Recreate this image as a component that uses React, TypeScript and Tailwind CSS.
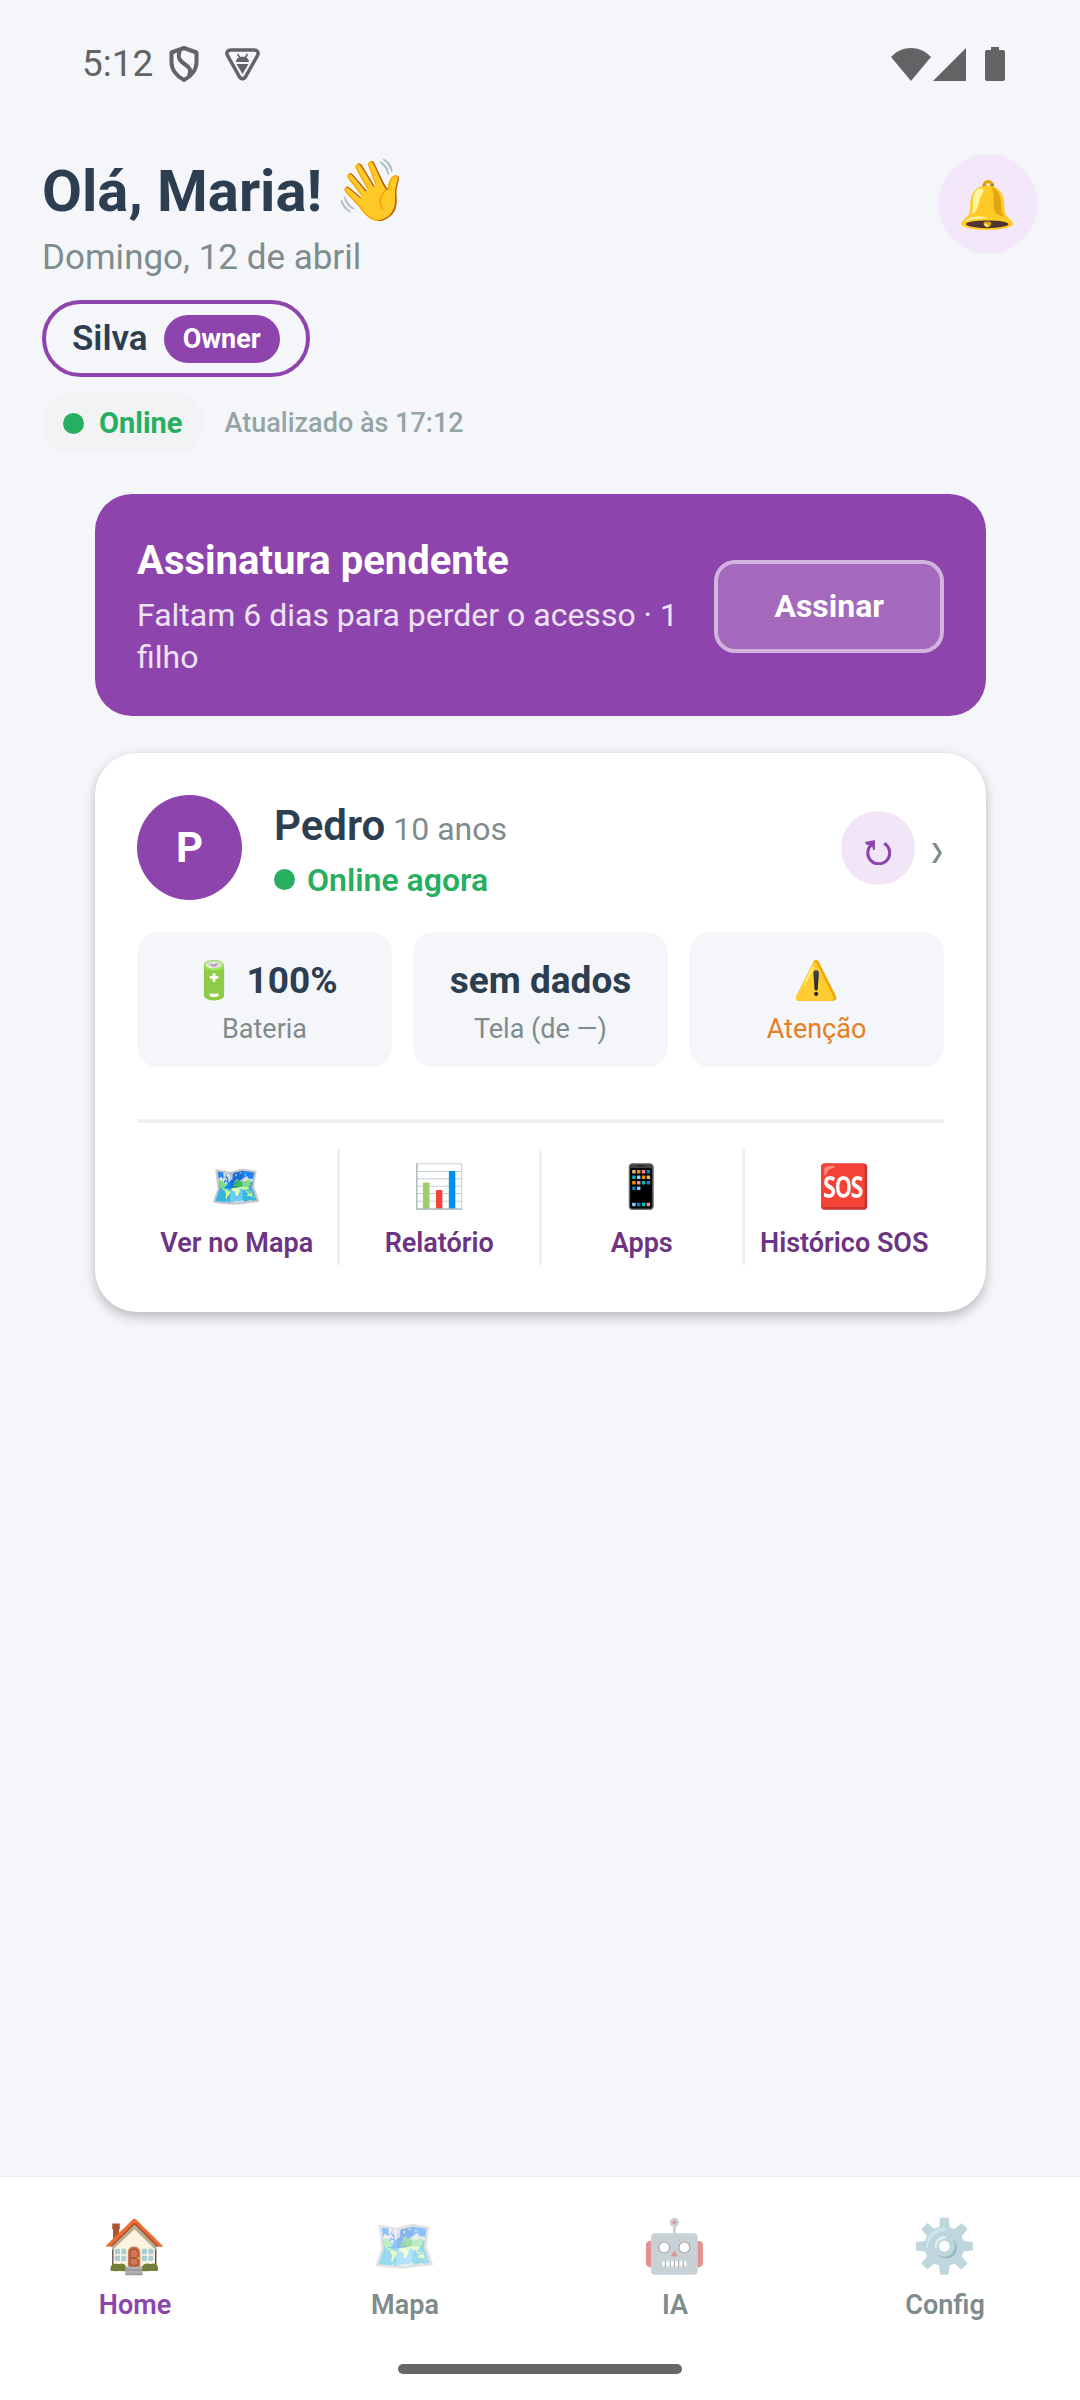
import { Fragment, useState } from 'react'

const stats = [
  { icon: '🔋', value: '100%', label: 'Bateria', warn: false },
  { icon: '', value: 'sem dados', label: 'Tela (de —)', warn: false },
  { icon: '⚠️', value: '', label: 'Atenção', warn: true },
]

const actions = [
  { icon: '🗺️', label: 'Ver no Mapa' },
  { icon: '📊', label: 'Relatório' },
  { icon: '📱', label: 'Apps' },
  { icon: '🆘', label: 'Histórico SOS' },
]

const tabs = [
  { icon: '🏠', label: 'Home' },
  { icon: '🗺️', label: 'Mapa' },
  { icon: '🤖', label: 'IA' },
  { icon: '⚙️', label: 'Config' },
]

function StatusBar() {
  return (
    <div className="flex h-32 items-center justify-between pl-[82px] pr-[75px] text-[#636365]">
      <div className="flex items-center">
        <span className="text-[37px] leading-[44px]">5:12</span>
        <svg className="ml-4 h-9 w-[30px]" viewBox="0 0 30 36" fill="none" stroke="currentColor" strokeWidth="4">
          <path d="M15 2 L27.500 6.500 V16 C27.500 24 22 30.500 15 34 C8 30.500 2.500 24 2.500 16 V6.500 Z" strokeLinejoin="round" />
          <path d="M11 4 C8 12 11 15 15.500 18 C21 21.500 22.500 24 20 30" />
        </svg>
        <svg className="ml-[26px] h-[34px] w-[35px]" viewBox="0 0 35 34">
          <path
            d="M6 3 H29 C32.500 3 34 5.500 32.500 8.500 L21 29 C19.500 32.500 15.500 32.500 14 29 L2.500 8.500 C1 5.500 2.500 3 6 3 Z"
            fill="none"
            stroke="currentColor"
            strokeWidth="3.500"
          />
          <path d="M11 15 C11 8 24 8 24 15 Z M11.500 17 H23.500 L17.500 27 Z" fill="currentColor" />
          <path d="M12.500 7 L15 11 M22.500 7 L20 11" stroke="currentColor" strokeWidth="1.500" />
        </svg>
      </div>
      <div className="flex items-center">
        <svg className="h-[33px] w-10" viewBox="0 0 40 33" fill="currentColor">
          <path d="M0 9 C11 -3 29 -3 40 9 L20 33 Z" />
        </svg>
        <svg className="ml-0.5 h-[33px] w-[33px]" viewBox="0 0 33 33" fill="currentColor">
          <path d="M33 0 V33 H0 Z" />
        </svg>
        <svg className="ml-[19px] h-[34px] w-5" viewBox="0 0 20 34" fill="currentColor">
          <path d="M6 0 H14 V3 H18 Q20 3 20 5 V32 Q20 34 18 34 H2 Q0 34 0 32 V5 Q0 3 2 3 H6 Z" />
        </svg>
      </div>
    </div>
  )
}

function Header() {
  return (
    <header className="flex items-start justify-between px-[42px] pt-[26px]">
      <div>
        <h1 className="flex items-center gap-3 text-[58px] leading-[74px] font-bold text-[#2c3e50]">
          Olá, Maria!
          <span className="text-[60px]">👋</span>
        </h1>
        <p className="mt-2 text-[35px] leading-[44px] text-[#7f8c8d]">Domingo, 12 de abril</p>
        <div className="mt-5 flex h-[77px] w-fit items-center gap-4 rounded-full border-4 border-[#8e44ad] px-[26px]">
          <span className="text-[35px] leading-[44px] font-semibold text-[#2c3e50]">Silva</span>
          <span className="rounded-full bg-[#8e44ad] px-[19px] py-2 text-[27px] leading-8 font-bold text-white">Owner</span>
        </div>
        <div className="mt-[15px] flex items-center gap-[21px]">
          <div className="flex h-[62px] items-center gap-[15px] rounded-full bg-[#f2f3f4] px-[21px]">
            <span className="size-[21px] rounded-full bg-[#27ae60]" />
            <span className="text-[29px] leading-9 font-bold text-[#27ae60]">Online</span>
          </div>
          <span className="text-[27px] leading-9 font-medium text-[#95a5a6]">Atualizado às 17:12</span>
        </div>
      </div>
      <button aria-label="Notificações" className="flex size-[100px] items-center justify-center rounded-full bg-[#f3e8f9] text-[47px] leading-none">
        🔔
      </button>
    </header>
  )
}

function SubscriptionBanner() {
  return (
    <section className="flex items-center gap-8 rounded-[37px] bg-[#8e44ad] px-[42px] pt-10 pb-[38px] text-white">
      <div className="flex-1">
        <h2 className="text-[40px] leading-[54px] font-bold">Assinatura pendente</h2>
        <p className="mt-1.5 text-[32px] leading-[42px] text-white/85">Faltam 6 dias para perder o acesso · 1 filho</p>
      </div>
      <button className="h-[93px] rounded-[21px] border-4 border-white/50 bg-white/20 px-14 text-[32px] leading-10 font-bold">
        Assinar
      </button>
    </section>
  )
}

function ChildCard() {
  return (
    <section className="rounded-[42px] bg-white px-[42px] pt-[42px] pb-[47px] shadow-[0_6px_12px_rgba(0,0,0,0.2),0_0_12px_rgba(0,0,0,0.06)]">
      <div className="flex items-center">
        <div className="flex size-[105px] items-center justify-center rounded-full bg-[#8e44ad] text-[42px] font-bold text-white">P</div>
        <div className="ml-8 flex-1 pt-1">
          <div className="flex items-baseline gap-2">
            <span className="text-[42px] leading-[52px] font-semibold text-[#2c3e50]">Pedro</span>
            <span className="text-[32px] leading-10 text-[#7f8c8d]">10 anos</span>
          </div>
          <div className="mt-2 flex items-center gap-3">
            <span className="size-[21px] rounded-full bg-[#27ae60]" />
            <span className="text-[32px] leading-10 font-semibold text-[#27ae60]">Online agora</span>
          </div>
        </div>
        <button aria-label="Atualizar" className="flex size-[74px] items-center justify-center rounded-full bg-[#f0e6f8] pt-2.5 text-[#8e44ad]">
          <svg className="h-[25px] w-[26px]" viewBox="0 0 76 73">
            <path d="M56 10 A32 32 0 1 1 20 13" fill="none" stroke="currentColor" strokeWidth="9" />
            <path d="M0 6 L29 0 V29 L24 29 L20 16 L4 14 Z" fill="currentColor" />
          </svg>
        </button>
        <button aria-label="Abrir perfil" className="ml-[15px] pt-2.5 text-[#7f8c8d]">
          <svg className="h-5 w-3.5" viewBox="0 0 14 20" fill="currentColor">
            <path d="M2 0 H6 L12 10 L6 20 H2 L8.500 10 Z" />
          </svg>
        </button>
      </div>

      <div className="mt-8 grid grid-cols-3 gap-[21px]">
        {stats.map((s) => (
          <div key={s.label} className="flex h-[135px] flex-col items-center rounded-[21px] bg-[#f4f6fa] pt-[27px]">
            <span className="text-[37px] leading-[44px] font-bold whitespace-pre text-[#2c3e50]">
              {[s.icon, s.value].filter(Boolean).join(' ')}
            </span>
            <span className={`mt-2.5 text-[27px] leading-8 ${s.warn ? 'text-[#e67e22]' : 'text-[#7f8c8d]'}`}>{s.label}</span>
          </div>
        ))}
      </div>

      <div className="mt-[52px] flex border-t-4 border-[#f0f0f0] pt-[26px]">
        {actions.map((a, i) => (
          <Fragment key={a.label}>
            {i > 0 && <span className="w-[3px] bg-[#f0f0f0]" />}
            <button className="flex h-[116px] flex-1 basis-0 flex-col items-center pt-3">
              <span className="text-[42px] leading-[52px]">{a.icon}</span>
              <span className="mt-3.5 text-[27px] leading-8 font-semibold whitespace-nowrap text-[#6c3483]">{a.label}</span>
            </button>
          </Fragment>
        ))}
      </div>
    </section>
  )
}

export default function App() {
  const [active, setActive] = useState('Home')

  return (
    <div className="flex min-h-screen flex-col bg-[#f4f6fa] font-['Roboto','Noto_Color_Emoji',sans-serif]">
      <StatusBar />
      <Header />
      <main className="flex flex-1 flex-col gap-[37px] pt-10 pr-[94px] pl-[95px]">
        <SubscriptionBanner />
        <ChildCard />
      </main>
      <footer className="border-t border-[#ecf0f1] bg-white pb-[26px]">
        <nav className="grid grid-cols-4 pt-10">
          {tabs.map((t) => (
            <button key={t.label} onClick={() => setActive(t.label)} className="flex flex-col items-center">
              <span className={`text-[52px] leading-[60px] ${active === t.label ? '' : 'opacity-50'}`}>{t.icon}</span>
              <span className={`mt-2.5 text-[27px] leading-9 font-semibold ${active === t.label ? 'text-[#8e44ad]' : 'text-[#7f8c8d]'}`}>
                {t.label}
              </span>
            </button>
          ))}
        </nav>
        <div className="mx-auto mt-[41px] h-2.5 w-[284px] rounded-full bg-[#666666]" />
      </footer>
    </div>
  )
}
